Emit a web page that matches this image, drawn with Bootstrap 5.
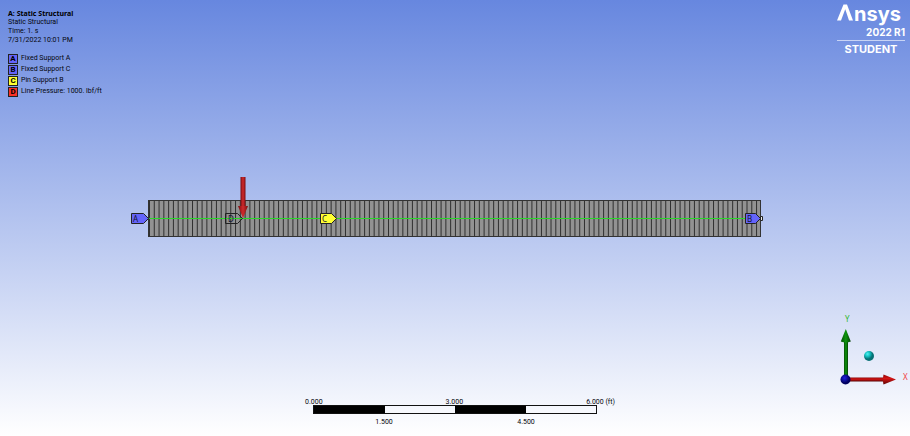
<!DOCTYPE html>
<html lang="en">
<head>
<meta charset="utf-8">
<meta name="viewport" content="width=device-width, initial-scale=1">
<title>A: Static Structural</title>
<link href="https://cdn.jsdelivr.net/npm/bootstrap@5.3.0/dist/css/bootstrap.min.css" rel="stylesheet">
<style>
body { font-family: Roboto, "Noto Sans", sans-serif; font-size: 7px; line-height: 9px; color: #05060c; }
.viewport { background: linear-gradient(#6787df, #fff); }
.info { padding: 9px 0 0 8px; }
.info h1 { font-family: "Noto Sans", sans-serif; font-size: 7px; line-height: 9px; font-weight: 700; color: #000; }
.legend { margin-top: 8px; }
.legend li { height: 11px; gap: 3px; }
.swatch { width: 10px; height: 10px; border: 1px solid #222; font-size: 8px; line-height: 8px; font-weight: 700; color: #000; }
.tag-blue { background: #6464fa; }
.tag-yellow { background: #ffff32; }
.tag-red { background: #fa3228; }
.brand { width: 68px; margin: 2px 5px 0 0; color: #fff; font-family: Inter, sans-serif; font-weight: 700; font-size: 11px; line-height: 12px; }
.release { border-bottom: 1px solid #c8d4f5; padding-bottom: 2px; margin-bottom: 2px; font-size: 10px; }
.scene text, .triad text { font-family: "Noto Sans", sans-serif; font-size: 8px; }
.ruler { width: 284px; margin-bottom: 9px; }
.ruler-top { margin: 0 -18px 0 -8px; line-height: 6px; }
.ruler-bar { height: 9px; border: 1px solid #111; margin-bottom: 4px; }
</style>
</head>
<body>
<main class="viewport min-vh-100 d-flex flex-column overflow-hidden">
  <header class="d-flex justify-content-between align-items-start">
    <section class="info">
      <h1 class="mb-0">A: Static Structural</h1>
      <div>Static Structural</div>
      <div>Time: 1. s</div>
      <div>7/31/2022 10:01 PM</div>
      <ul class="legend list-unstyled mb-0">
        <li class="d-flex align-items-center"><span class="swatch tag-blue text-center">A</span>Fixed Support A</li>
        <li class="d-flex align-items-center"><span class="swatch tag-blue text-center">B</span>Fixed Support C</li>
        <li class="d-flex align-items-center"><span class="swatch tag-yellow text-center">C</span>Pin Support B</li>
        <li class="d-flex align-items-center"><span class="swatch tag-red text-center">D</span>Line Pressure: 1000. lbf/ft</li>
      </ul>
    </section>
    <section class="brand text-center">
      <svg class="d-block" width="70" height="24" viewBox="0 0 70 24" role="img" aria-label="Ansys">
        <path d="M0 18.500 6.500 2.500H10L4 18.500zM8 6.500 10 2.500 16 18.500h-4z" fill="#fff"/>
        <text x="17" y="19" font-family="Inter, sans-serif" font-size="20" font-weight="700" fill="#fff">nsys</text>
      </svg>
      <div class="release text-end">2022 R1</div>
      <div>STUDENT</div>
    </section>
  </header>

  <svg class="scene w-100 my-auto d-block" viewBox="0 164 910 82" role="img" aria-label="Beam model with supports and load">
    <defs>
      <linearGradient id="redShaft"><stop stop-color="#7a0c10"/><stop offset=".5" stop-color="#d02a2c"/><stop offset="1" stop-color="#7a0c10"/></linearGradient>
    </defs>
    <rect x="149" y="200" width="612" height="37" fill="#929292"/>
    <path d="M149 218.500h612" stroke="#303030" stroke-width="37" stroke-dasharray="1 3.780"/>
    <rect x="148.500" y="200.500" width="612" height="36" fill="none" stroke="#333"/>
    <rect x="149" y="218" width="612" height="1" fill="#28d828"/>
    <g stroke="#222" stroke-width="1">
      <path d="M131.500 213.500h12l5 5-5 5h-12z" fill="#6464fa"/>
      <path d="M225.500 213.500h12l5 5-5 5h-12z" fill="none"/>
      <path d="M320.500 213.500h11l5 5-5 5h-11z" fill="#ffff32"/>
      <path d="M745.500 213.500h10l5 5-5 5h-10z" fill="#6464fa"/>
      <path d="M760.500 216.500h2v4h-2z" fill="#eee"/>
    </g>
    <g fill="#151530"><text x="133" y="222">A</text><text x="228" y="222">D</text><text x="322" y="222">C</text><text x="747" y="222">B</text></g>
    <path d="M240.500 177h5v29h-5z" fill="url(#redShaft)"/>
    <path d="M238 206h10l-5 12z" fill="url(#redShaft)"/>
  </svg>

  <footer class="d-flex align-items-end">
    <div class="col"></div>
    <section class="ruler">
      <div class="ruler-top d-flex justify-content-between"><span>0.000</span><span>3.000</span><span>6.000 (ft)</span></div>
      <div class="ruler-bar d-flex"><div class="col bg-black"></div><div class="col"></div><div class="col bg-black"></div><div class="col"></div></div>
      <div class="d-flex"><span class="col text-center">1.500</span><span class="col text-center">4.500</span></div>
    </section>
    <div class="col d-flex justify-content-end">
      <svg class="triad" width="82" height="123" viewBox="828 313 82 123" role="img" aria-label="Coordinate axes">
        <defs>
          <linearGradient id="green"><stop stop-color="#064d06"/><stop offset=".5" stop-color="#0c960c"/><stop offset="1" stop-color="#043c04"/></linearGradient>
          <linearGradient id="red" x2="0" y2="1"><stop stop-color="#8c0808"/><stop offset=".4" stop-color="#d41414"/><stop offset="1" stop-color="#5a0404"/></linearGradient>
          <radialGradient id="blue" cx=".4" cy=".35"><stop stop-color="#2020e0"/><stop offset="1" stop-color="#000060"/></radialGradient>
          <radialGradient id="cyan" cx=".35" cy=".3"><stop stop-color="#50f4f4"/><stop offset=".5" stop-color="#14c0c0"/><stop offset="1" stop-color="#067074"/></radialGradient>
        </defs>
        <path d="M844 341h4v36h-4z" fill="url(#green)"/>
        <path d="M845.800 329l5 12.500q-5 2-10 0z" fill="url(#green)"/>
        <path d="M848 377.500h36v4h-36z" fill="url(#red)"/>
        <path d="M896 379.500l-12.500 5q-1.500-5 0-10z" fill="url(#red)"/>
        <circle cx="845.500" cy="379.500" r="5" fill="url(#blue)"/>
        <circle cx="869" cy="356" r="5" fill="url(#cyan)"/>
        <text x="845" y="322" fill="#30b830">Y</text>
        <text x="903" y="380" fill="#f04040">X</text>
      </svg>
    </div>
  </footer>
</main>
<script src="https://cdn.jsdelivr.net/npm/bootstrap@5.3.0/dist/js/bootstrap.bundle.min.js"></script>
</body>
</html>
